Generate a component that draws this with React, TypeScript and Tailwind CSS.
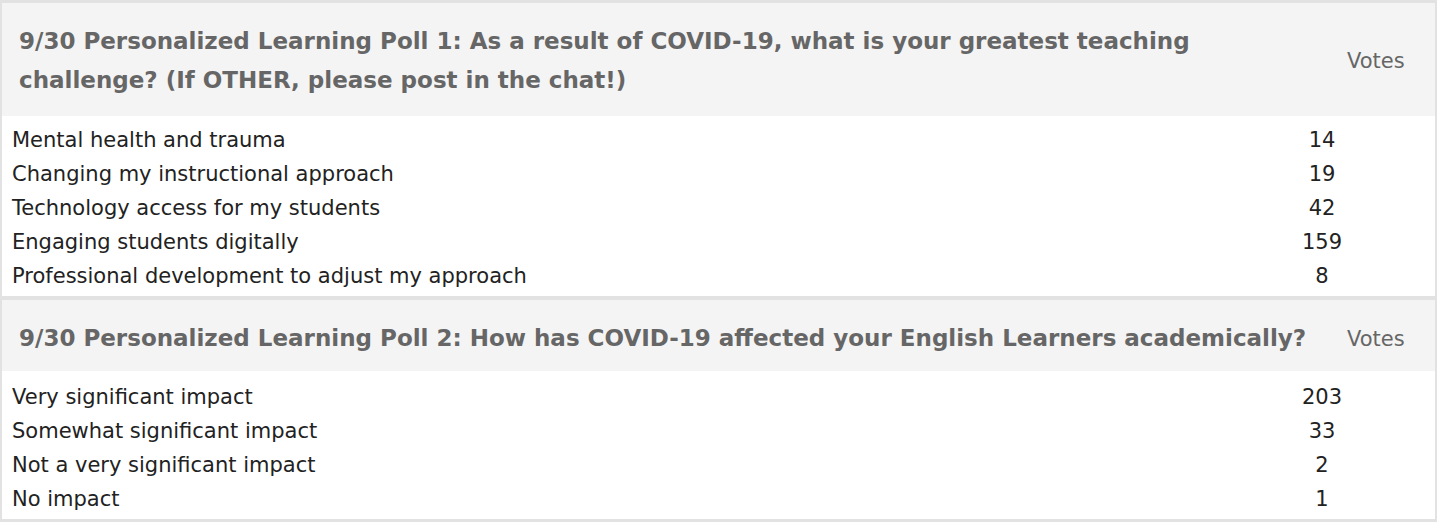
import React from "react";

type Poll = {
  title: React.ReactNode;
  headerH: string;
  titlePad: string;
  votesPad: string;
  bodyPad: string;
  rows: [string, number][];
};

const polls: Poll[] = [
  {
    title: (
      <>
        9/30 Personalized Learning Poll 1: As a result of COVID-19, what is your greatest teaching
        <br />
        challenge? (If OTHER, please post in the chat!)
      </>
    ),
    headerH: "h-[113px]",
    titlePad: "pt-[2px]",
    votesPad: "pt-[4px]",
    bodyPad: "pt-[7px] pb-[3px]",
    rows: [
      ["Mental health and trauma", 14],
      ["Changing my instructional approach", 19],
      ["Technology access for my students", 42],
      ["Engaging students digitally", 159],
      ["Professional development to adjust my approach", 8],
    ],
  },
  {
    title: <>9/30 Personalized Learning Poll 2: How has COVID-19 affected your English Learners academically?</>,
    headerH: "h-[71px]",
    titlePad: "pt-[6px]",
    votesPad: "pt-[8px]",
    bodyPad: "pt-[9px] pb-[3px]",
    rows: [
      ["Very significant impact", 203],
      ["Somewhat significant impact", 33],
      ["Not a very significant impact", 2],
      ["No impact", 1],
    ],
  },
];

export default function App() {
  return (
    <div
      className="w-[1437px] bg-white border-l-[2px] border-r-[2px] border-b-[3px] border-[#e2e2e2]"
      style={{ fontFamily: "'DejaVu Sans', 'Liberation Sans', sans-serif" }}
    >
      {polls.map((p, i) => (
        <div key={i} className={i === 0 ? "border-t-[3px] border-[#e2e2e2]" : "border-t-[4px] border-[#e2e2e2]"}>
          <div className={`flex items-center bg-[#f4f4f4] ${p.headerH}`}>
            <div
              className={`min-w-0 flex-1 pl-[17px] text-[23px] font-bold leading-[39px] text-[#666666] whitespace-nowrap ${p.titlePad}`}
            >
              {p.title}
            </div>
            <div className={`w-[88px] shrink-0 text-[21px] text-[#666666] ${p.votesPad}`}>Votes</div>
          </div>
          <div className={p.bodyPad}>
            {p.rows.map(([label, n]) => (
              <div key={label} className="flex h-[34px] items-baseline text-[21px] leading-[34px] text-[#222222]">
                <div className="flex-1 pl-[10px]">{label}</div>
                <div className="w-[100px] text-center mr-[63px]">{n}</div>
              </div>
            ))}
          </div>
        </div>
      ))}
    </div>
  );
}
